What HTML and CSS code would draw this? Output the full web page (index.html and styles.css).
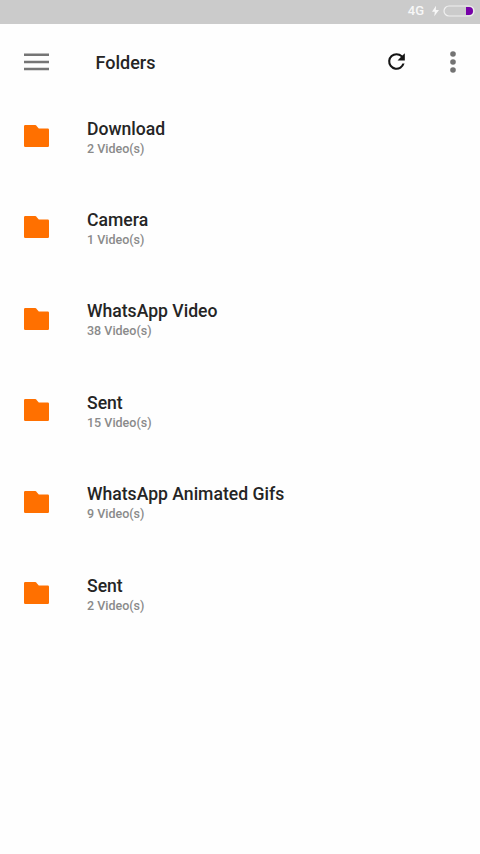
FILE: index.html
```html
<!DOCTYPE html>
<html lang="en">
<head>
<meta charset="utf-8">
<title>Folders</title>
<link rel="stylesheet" href="styles.css">
</head>
<body>
<svg width="0" height="0" class="defs" aria-hidden="true">
  <symbol id="folder" viewBox="0 0 25 22"><path d="M1.2 0H11q1.2 0 1.8 1.2L14.8 3.6H23.8Q25 3.6 25 4.8V20.8Q25 22 23.8 22H1.2Q0 22 0 20.8V1.2Q0 0 1.2 0z"/></symbol>
</svg>
<div class="status">
  <span class="network">4G</span>
  <svg class="bolt" viewBox="0 0 8 12"><path d="M4.6 0L0 6.8h3.2L2.6 12 8 4.8H4.4z"/></svg>
  <svg class="battery" viewBox="0 0 32 12"><rect x="1" y="1" width="30" height="10" rx="5" fill="none" stroke="#f0f0f0" stroke-width="1.2"/><path d="M23 2h3a4 4 0 0 1 0 8H23z" fill="#7600a8"/></svg>
</div>
<header class="toolbar">
  <svg class="menu" viewBox="0 0 25 18"><path d="M0 1.7h25M0 8.9h25M0 16.1h25" stroke="#757575" stroke-width="2.5"/></svg>
  <h1>Folders</h1>
  <svg class="refresh" viewBox="0 0 24 24"><path d="M17.65 6.35A7.96 7.96 0 0 0 12 4a8 8 0 1 0 7.73 10h-2.08A6 6 0 1 1 12 6c1.66 0 3.14.69 4.22 1.78L13 11h7V4z"/></svg>
  <svg class="more" viewBox="0 0 6 22"><circle cx="3" cy="3" r="2.8"/><circle cx="3" cy="11" r="2.8"/><circle cx="3" cy="19" r="2.8"/></svg>
</header>
<main class="list">
  <div class="row"><svg class="folder"><use href="#folder"/></svg><div><h2>Download</h2><p>2 Video(s)</p></div></div>
  <div class="row"><svg class="folder"><use href="#folder"/></svg><div><h2>Camera</h2><p>1 Video(s)</p></div></div>
  <div class="row"><svg class="folder"><use href="#folder"/></svg><div><h2>WhatsApp Video</h2><p>38 Video(s)</p></div></div>
  <div class="row"><svg class="folder"><use href="#folder"/></svg><div><h2>Sent</h2><p>15 Video(s)</p></div></div>
  <div class="row"><svg class="folder"><use href="#folder"/></svg><div><h2>WhatsApp Animated Gifs</h2><p>9 Video(s)</p></div></div>
  <div class="row"><svg class="folder"><use href="#folder"/></svg><div><h2>Sent</h2><p>2 Video(s)</p></div></div>
</main>
</body>
</html>
```
FILE: styles.css
```css
* { box-sizing: border-box; }
body { margin: 0; min-height: 854px; background: #fefefe; font-family: Roboto, sans-serif; color: #252525; }
h1, h2, p { margin: 0; font-weight: 500; }
.defs { display: none; }
.status { height: 24px; background: #cbcbcb; display: flex; align-items: center; justify-content: flex-end; padding: 0 5px 2px 0; color: #f7f7f7; }
.network { font-size: 13px; font-weight: 500; line-height: 16px; margin-right: 8px; }
.bolt { width: 7px; height: 12px; fill: #f7f7f7; margin-right: 4px; }
.battery { width: 32px; height: 12px; }
.toolbar { height: 76px; display: flex; align-items: center; padding: 0 24px; }
.menu { width: 25px; height: 18px; margin-top: -1px; }
h1 { font-size: 18px; line-height: 24px; margin-left: 46.5px; flex: 1; padding-top: 1px; }
.refresh { width: 25px; height: 25px; fill: #151515; margin-right: 40.5px; margin-top: -1px; }
.more { width: 6px; height: 22px; fill: #737373; margin-right: 0.5px; }
.list { padding-top: 16px; }
.row { height: 91.4px; display: flex; padding-left: 24px; }
.folder { width: 25px; height: 22px; fill: #ff7000; margin: 9px 38px 0 0; }
h2 { font-size: 17.6px; line-height: 24px; padding-top: 0.6px; }
p { font-size: 12.5px; line-height: 16px; color: #8a8a8a; }
```
